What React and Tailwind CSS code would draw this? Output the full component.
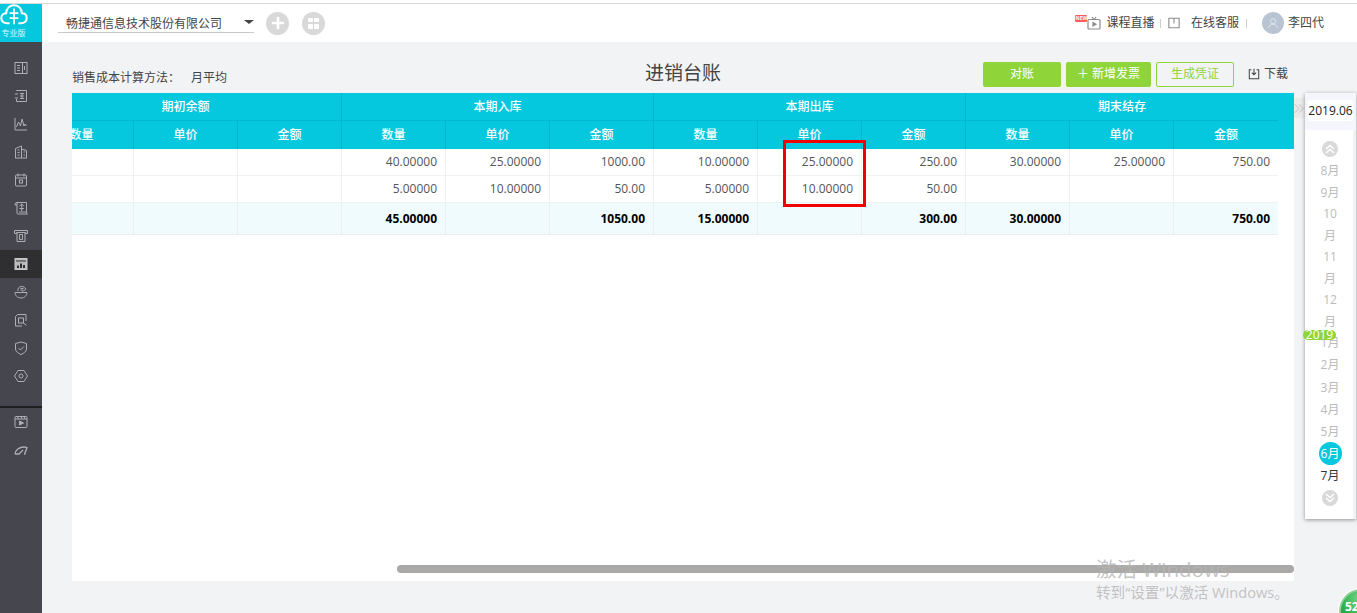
import React from "react";

const FONT = "font-['Open_Sans','Noto_Sans_CJK_SC',sans-serif]";

const Ico = ({ children, size = 16, cls = "text-[#aeaeb3]" }) => (
  <svg viewBox="0 0 16 16" width={size} height={size} fill="none" stroke="currentColor" strokeWidth="1" className={cls}>
    {children}
  </svg>
);

const NAV = [
  <><rect x="2" y="2.500" width="12" height="11" /><path d="M9.500 2.500v11M4 5.500h3M4 8h3M4 10.500h3M11.500 6v4" /></>,
  <><path d="M3.500 3v-.5h10v11h-10V11" /><path d="M2 6h3M2 10h3M7 5.500h4M9 5.500v5M7 8h4M7 10.500h4" /></>,
  <><path d="M2 2v12h12" /><path d="M3.500 11l2-5 2 4 1.500-7 2 7 1-2 1.500 2" /></>,
  <><path d="M2.500 14V4.500l6-2.500v12M8.500 5l5 1.500V14M2 14h12" /><path d="M4.500 6h2M4.500 8.500h2M4.500 11h2M10.500 8h1.500M10.500 11h1.500" /></>,
  <><rect x="2.500" y="3" width="11" height="11" rx="1" /><path d="M5 1.500v3M11 1.500v3M2.500 6h11" /><rect x="6.500" y="8" width="3" height="3" /></>,
  <><path d="M4 13V2.500h9.500V12" /><path d="M4 2.500C2.500 2.500 2 3.500 2 5h2M4 13c0 .8.500 1 1 1h9.500c-.8 0-1-1-1-2H6" /><path d="M8.700 4v7M6.500 6l2.200-2 2.200 2M6.500 8.500h4.400" /></>,
  <><path d="M1.500 2.500h13v3h-2v-1h-9v1h-2z" /><path d="M4 4.500V13.500h8V4.500" /><path d="M6.500 6.500h3v5h-3z" /></>,
  <><rect x="2" y="2.500" width="12" height="11" fill="#bdbdbd" stroke="#c8c8c8" /><path d="M3 5h10" stroke="#2f2f31" /><path d="M4 12V9.500h2V12M7 12V7.500h2V12M10 12V9h2v3" fill="#2f2f31" stroke="none" /></>,
  <><path d="M2 8.500h12c0 3-2.500 5.500-6 5.500s-6-2.500-6-5.500z" /><path d="M5 7c-.5-2.500 1-4.500 3.500-4.500 2 0 4 1 4 2.500s-2 2-3.500 2" /><path d="M7.500 4.500h3M7.500 6h2" /></>,
  <><path d="M13 9V2.500H4.500L2.500 4.500V14H9" /><rect x="5.500" y="6" width="5" height="5" /><path d="M10.500 11l3 2.500" /></>,
  <><path d="M8 2l5.500 1.500v5.500c0 2.500-3 4.500-5.500 5.500-2.500-1-5.500-3-5.500-5.500V3.500z" /><path d="M5.500 8l2 2 3.500-3.500" /></>,
  <><path d="M5 2.500h6l3.500 5.500-3.500 5.500H5L1.500 8z" /><circle cx="8" cy="8" r="2" /></>,
];

const MONTHS_LAST_YEAR = ["8月", "9月", "10月", "11月", "12月"];
const MONTHS = ["1月", "2月", "3月", "4月", "5月"];

const Nav = ({ icon, active }) => (
  <div className={`h-7 flex items-center justify-center ${active ? "bg-[#2f2f31]" : ""}`}>
    <Ico>{icon}</Ico>
  </div>
);

function Sidebar() {
  return (
    <aside className="w-[42px] shrink-0 bg-[#46464f] flex flex-col">
      <div className="h-[38px] bg-[#05c7de] flex flex-col items-start text-white">
        <svg viewBox="0 0 32 24" width="28" height="21" fill="none" stroke="white" strokeWidth="2.400">
          <path d="M8 22c-4 0-6.500-2.500-6.500-6S4 10.500 7 10.500C7.500 5 11 1.500 16 1.500s8.500 3.500 9 9c3.500 0 5.500 2 5.500 5.500S28 22 24 22h-3M11 22H8" />
          <path d="M16 5v18M11 10.500h10M11 16h10" strokeWidth="2" />
        </svg>
        <span className="text-[8px] leading-[10px] ml-[1px] mt-[3px] w-[25px] text-center text-white/85">专业版</span>
      </div>
      <div className="mt-3">
        {NAV.map((n, i) => <Nav key={i} icon={n} active={i === 7} />)}
      </div>
      <div className="mt-4 border-t-2 border-[#1f1f21]">
        <Nav icon={<><rect x="2" y="2.500" width="12" height="11" rx="1" /><path d="M2 5h12M4.500 2.500L5.500 5M8 2.500L9 5M11 2.500L12 5" /><path d="M6.500 7l4 2-4 2z" fill="currentColor" /></>} />
        <Nav icon={<path d="M2 12c.5-4 4-7 9-7 1.500 0 2.500.3 3 .5-.5 2-1.500 4.500-2.500 6.500M2 12h4l4-4M11 12h1.500" strokeWidth="1.300" />} />
      </div>
    </aside>
  );
}

function TopBar() {
  return (
    <header className="h-[38px] bg-white flex items-center pr-[33px] text-[12px] text-[#444]">
      <div className="ml-4 w-[196px] h-[20px] border-b border-[#c9c9c9] flex items-end justify-between pl-2">
        <span className="leading-[17px]">畅捷通信息技术股份有限公司</span>
        <span className="w-0 h-0 border-x-[5px] border-x-transparent border-t-[4px] border-t-[#444] mb-[8px]" />
      </div>
      <span className="ml-[12px] w-[23px] h-[23px] rounded-full bg-[#d9d9d9] flex items-center justify-center">
        <svg viewBox="0 0 16 16" width="14" height="14" stroke="white" strokeWidth="3"><path d="M8 1v14M1 8h14" /></svg>
      </span>
      <span className="ml-[13px] w-[23px] h-[23px] rounded-full bg-[#d9d9d9] grid grid-cols-2 gap-[1.500px] p-[6px]">
        <i className="bg-white rounded-[1px]" /><i className="bg-white rounded-[1px]" />
        <i className="bg-white rounded-[1px]" /><i className="bg-white rounded-[1px]" />
      </span>
      <div className="ml-auto flex items-center">
        <span className="relative w-[26px] h-[14px] mr-[5px]">
          <span className="absolute left-0 top-[-1px] w-[12px] h-[7px] bg-[#f9605a] rounded-[1px] text-white text-[5px] leading-[7px] text-center font-bold">NEW</span>
          <svg viewBox="0 0 14 14" width="14" height="14" fill="none" stroke="#8c8c8c" strokeWidth="1.200" className="absolute right-0 top-0">
            <rect x="1" y="3.500" width="12" height="9.500" rx="1" /><path d="M5 1l2 2.500L9 1" /><path d="M6 6.500l3 1.700-3 1.700z" fill="#8c8c8c" />
          </svg>
        </span>
        <span>课程直播</span>
        <span className="w-px h-[9px] bg-[#ccc] mx-[6px]" />
        <svg viewBox="0 0 14 14" width="12" height="12" fill="none" stroke="#8c8c8c" strokeWidth="1.300" className="ml-[0.5px]">
          <path d="M1 1.500h12v11H1zM7 1.500v6" />
        </svg>
        <span className="ml-[11px]">在线客服</span>
        <span className="w-px h-[9px] bg-[#ccc] ml-[7px]" />
        <span className="ml-[15px] w-[22px] h-[22px] rounded-full bg-[#b9c4d2] flex items-center justify-center">
          <svg viewBox="0 0 14 14" width="12" height="12" fill="none" stroke="#e6eaf0" strokeWidth="1"><circle cx="7" cy="5" r="3" /><path d="M2 13c0-3 2.500-4.500 5-4.500S12 10 12 13" /></svg>
        </span>
        <span className="ml-[4px]">李四代</span>
      </div>
    </header>
  );
}

function Toolbar() {
  return (
    <div className="h-[25px] mt-[19px] ml-[30px] mr-[69px] grid grid-cols-[573px_auto_1fr] items-center text-[12px] text-[#444]">
      <div className="flex mt-[8px]">
        <span className="w-[119px]">销售成本计算方法：</span>
        <span>月平均</span>
      </div>
      <h1 className="text-[19px] font-normal text-[#444] leading-[25px] mt-[-1px]">进销台账</h1>
      <div className="flex items-center justify-end">
        <button className="w-[78px] h-[25px] rounded-[2px] bg-[#8fd53a] text-white">对账</button>
        <button className="ml-[5px] w-[85px] h-[25px] rounded-[2px] bg-[#8fd53a] text-white">＋ 新增发票</button>
        <button className="ml-[5px] w-[78px] h-[25px] rounded-[2px] border border-[#8fd53a] text-[#8fd53a]">生成凭证</button>
        <svg viewBox="0 0 14 14" width="12" height="12" fill="none" stroke="#444" strokeWidth="1.200" className="ml-[14px]">
          <path d="M4 2H1.500v10.500h11V2H10M7 1v7M4.500 5.500L7 8l2.500-2.500" />
        </svg>
        <span className="ml-[4px]">下载</span>
      </div>
    </div>
  );
}

const HEAD = ["数量", "单价", "金额"];
const ROWS = [
  ["", "", "", "40.00000", "25.00000", "1000.00", "10.00000", "25.00000", "250.00", "30.00000", "25.00000", "750.00"],
  ["", "", "", "5.00000", "10.00000", "50.00", "5.00000", "10.00000", "50.00", "", "", ""],
];
const TOTAL = ["", "", "", "45.00000", "", "1050.00", "15.00000", "", "300.00", "30.00000", "", "750.00"];

function Ledger() {
  return (
    <div className="relative w-[1248px] ml-[-42px] shrink-0">
      <table className="w-[1248px] table-fixed border-separate border-spacing-0 text-[12px]">
        <thead className="bg-[#05c7de] text-white">
          <tr className="h-[28px]">
            {["期初余额", "本期入库", "本期出库", "期末结存"].map((g) => (
              <th key={g} colSpan={3} className="font-medium border-b border-r border-[#04b6cd] last:border-r-0">{g}</th>
            ))}
          </tr>
          <tr className="h-[28px]">
            {[0, 1, 2, 3].flatMap((g) => HEAD.map((h) => (
              <th key={g + h} className="font-medium border-r border-[#04b6cd] last:border-r-0">{h}</th>
            )))}
          </tr>
        </thead>
        <tbody className="text-[#555]">
          {ROWS.map((r, i) => (
            <tr key={i} className="h-[27px] bg-white">
              {r.map((c, j) => <td key={j} className="border-r border-b border-[#f0f1f3] text-right pr-2 last:border-r-0">{c}</td>)}
            </tr>
          ))}
          <tr className="h-[32px] bg-[#effbfd] text-black font-bold">
            {TOTAL.map((c, j) => <td key={j} className="border-r border-b border-[#e9eef0] text-right pr-2 last:border-r-0">{c}</td>)}
          </tr>
        </tbody>
      </table>
      <div className="absolute left-[753px] top-[47px] w-[83px] h-[67px] border-[3px] border-[#f00000]" />
    </div>
  );
}

function MonthPanel() {
  return (
    <div className="relative w-[51px] h-[426px] bg-white shadow-[0_1px_4px_rgba(0,0,0,0.4)] flex flex-col text-[12px]">
      <div className="h-[37px] bg-[#f5f6fd] pt-[7px] pl-[3px] shrink-0">
        <div className="w-[45px] h-[21px] bg-white rounded-[3px] leading-[21px] text-center text-[12px] text-[#222]">2019.06</div>
      </div>
      <div className="flex flex-1 min-h-0">
        <div className="w-[48px] pl-[2px] flex flex-col items-center pt-[11px]">
          <span className="w-4 h-4 rounded-full bg-[#d9d9d9] flex items-center justify-center">
            <svg viewBox="0 0 12 12" width="12" height="12" fill="none" stroke="white" strokeWidth="1.500"><path d="M2 6l4-3.500L10 6M2 10l4-3.500L10 10" /></svg>
          </span>
          <div className="mt-[3px] w-[22px] text-center leading-[21.500px] text-[#bbb]">
            {MONTHS_LAST_YEAR.map((m) => <div key={m}>{m}</div>)}
          </div>
          <div className="w-[22px] text-center leading-[22.250px] text-[#bbb]">
            {MONTHS.map((m) => <div key={m}>{m}</div>)}
          </div>
          <span className="w-[23px] h-[23px] rounded-full bg-[#05c7de] text-white leading-[23px] text-center mt-[-1px]">6月</span>
          <span className="leading-[21px] text-[#333]">7月</span>
          <span className="mt-[4px] w-4 h-4 rounded-full bg-[#d9d9d9] flex items-center justify-center">
            <svg viewBox="0 0 12 12" width="12" height="12" fill="none" stroke="white" strokeWidth="1.500"><path d="M2 2l4 3.500L10 2M2 6l4 3.500L10 6" /></svg>
          </span>
        </div>
        <div className="flex-1 bg-[#f2f2f2]" />
      </div>
      <span className="absolute left-[-2px] top-[237px] w-[33px] h-[10px] rounded-[5px] bg-[#8fd53a] text-white text-[12px] leading-[10px] text-center overflow-hidden">2019</span>
    </div>
  );
}

export default function App() {
  return (
    <div className={`relative w-[1357px] h-[613px] overflow-hidden bg-[#f2f3f5] ${FONT}`}>
      <div className="h-1 bg-white border-b border-[#d9d9d9]" />
      <div className="flex h-[609px]">
        <Sidebar />
        <main className="flex-1 min-w-0 flex flex-col">
          <TopBar />
          <Toolbar />
          <div className="flex mt-[7px] ml-[30px]">
            <section className="w-[1222px] h-[488px] bg-white flex flex-col overflow-hidden">
              <div className="flex">
                <Ledger />
                <div className="w-4 h-14 bg-[#05c7de] shrink-0" />
              </div>
              <div className="mt-auto mb-2 ml-[325px] h-2 rounded-full bg-[#aaa9a7]" />
            </section>
            <button className="w-[11px] h-5 mt-[5px] bg-[#ebebeb] flex items-center justify-center shrink-0">
              <svg viewBox="0 0 12 12" width="11" height="11" fill="none" stroke="#b5b5b5" strokeWidth="1"><path d="M1 1.500L5.500 6 1 10.500M5.500 1.500L10 6l-4.500 4.500" /></svg>
            </button>
            <MonthPanel />
          </div>
        </main>
      </div>
      <div className="absolute left-[1096px] top-[556px] text-[#b4b4b4]/80 pointer-events-none">
        <div className="text-[20.500px] leading-[26px]">激活 Windows</div>
        <div className="text-[14.600px] leading-[20px]">转到“设置”以激活 Windows。</div>
      </div>
      <div className="absolute left-[1339px] top-[589px] w-11 h-11 rounded-full border-2 border-[#8fcf98] bg-[radial-gradient(circle_at_50%_20%,#7bd68a,#22aa45_60%)] outline outline-1 outline-white text-white font-bold text-[12px] pt-[9px] pl-[4px] leading-[14px]">52</div>
    </div>
  );
}
